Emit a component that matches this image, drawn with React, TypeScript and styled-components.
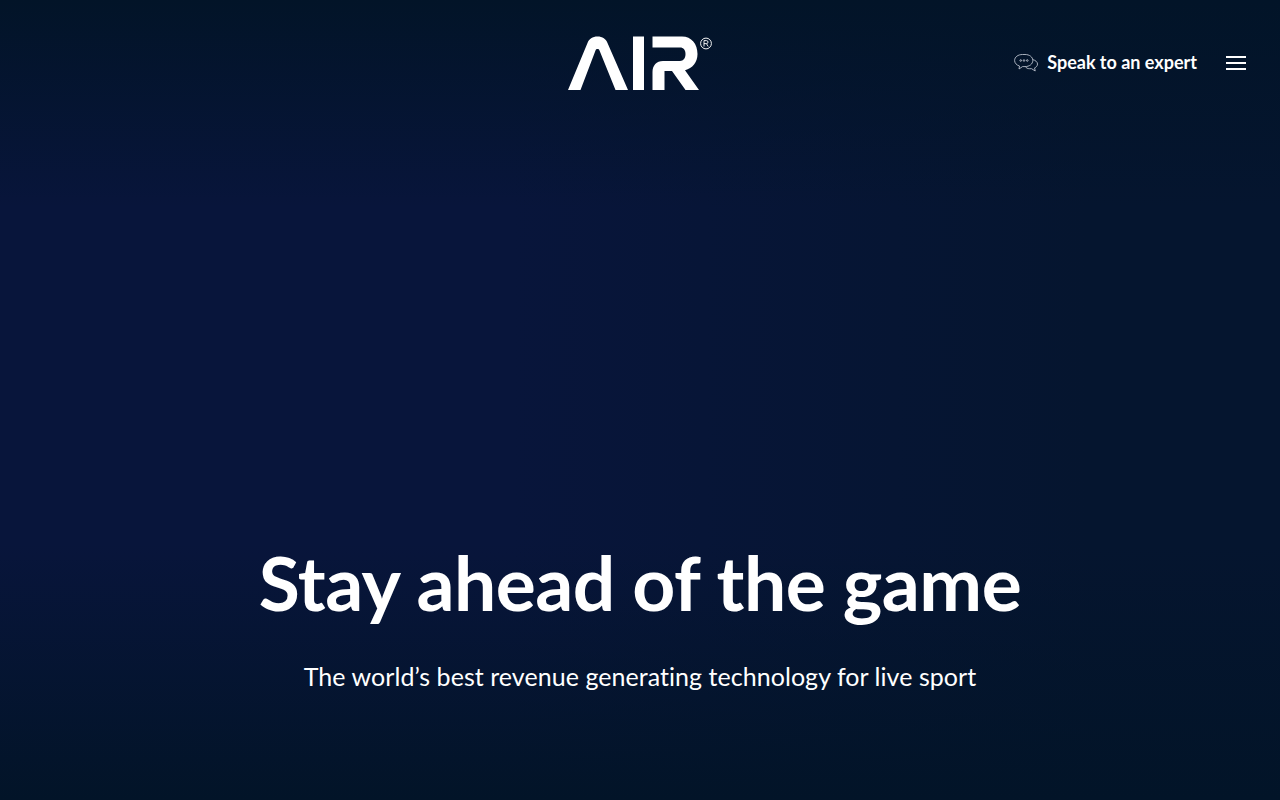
import React from "react";
import styled, { createGlobalStyle } from "styled-components";

const Global = createGlobalStyle`
  html, body { margin: 0; padding: 0; height: 100%; background: #03122b; }
  #root { height: 100%; }
`;

const Page = styled.main`
  width: 1280px;
  height: 800px;
  overflow: hidden;
  display: flex;
  flex-direction: column;
  color: #fff;
  font-family: Lato, "Liberation Sans", sans-serif;
  font-variant-ligatures: none;
  background:
    linear-gradient(180deg, #021428 0%, rgba(2, 20, 40, 0) 26%, rgba(2, 20, 40, 0) 68%, #021428 100%),
    linear-gradient(90deg, #08153b 0%, #08153b 40%, #05152f 85%, #05152f 100%);
`;

const Header = styled.header`
  display: grid;
  grid-template-columns: 1fr auto 1fr;
  align-items: center;
  height: 126px;
`;

const Logo = styled.svg`
  display: block;
  grid-column: 2;
  width: 144px;
  height: 56px;
`;

const Actions = styled.div`
  grid-column: 3;
  justify-self: end;
  display: flex;
  align-items: center;
  margin-right: 34px;
`;

const Expert = styled.a`
  display: flex;
  align-items: center;
  gap: 9px;
  color: #fff;
  font-size: 18px;
  font-weight: 700;
  line-height: 24px;
  text-decoration: none;
`;

const ExpertLabel = styled.span`
  position: relative;
  top: -1px;
`;

const ChatIcon = styled.svg`
  display: block;
  width: 24px;
  height: 22px;
`;

const Burger = styled.button`
  display: flex;
  flex-direction: column;
  justify-content: space-between;
  width: 20px;
  height: 14px;
  margin-left: 29px;
  padding: 0;
  border: 0;
  background: none;
`;

const BurgerBar = styled.span`
  display: block;
  height: 2px;
  background: #fff;
`;

const Hero = styled.section`
  flex: 1;
  display: flex;
  flex-direction: column;
  align-items: center;
  justify-content: flex-end;
  padding-bottom: 107px;
`;

const Title = styled.h1`
  margin: 0 0 33px;
  font-size: 75px;
  line-height: 92px;
  font-weight: 700;
  letter-spacing: -0.55px;
`;

const Sub = styled.p`
  margin: 0;
  font-size: 25px;
  line-height: 32px;
  font-weight: 400;
  letter-spacing: 0.05px;
  position: relative;
  top: -1px;
`;

export default function App() {
  return (
    <Page>
      <Global />
      <Header>
        <Logo viewBox="0 0 144 56" aria-label="AIR">
          <path
            fill="#fff"
            d="M0 55 L19.5 8 C21 4 24.5 1.5 29.5 1.5 C34.5 1.5 38 4 39.5 8 L60 55 H47.5 L31.5 15.5 C30.8 13.6 28.2 13.6 27.5 15.5 L12.5 55 Z"
          />
          <rect x="65" y="1.5" width="11" height="53.5" fill="#fff" />
          <path
            fill="#fff"
            d="M84.5 1.5 H114 C123.5 1.5 129.5 9 129.5 19 C129.5 27 124.5 33.5 117 35.2 L131 55 H117.5 L104 36 H96.5 V55 H84.5 V37 C84.5 30.5 88.5 26 95 26 H112 C115.5 26 117.5 23 117.5 19 C117.5 15 115.5 12.5 112 12.5 H84.5 Z"
          />
          <circle cx="138" cy="8.5" r="5.4" fill="none" stroke="#fff" strokeWidth="0.95" />
          <path
            d="M136 11.5 V5.6 H138.4 Q140 5.6 140 7.1 Q140 8.6 138.4 8.6 H136 M138.4 8.6 L140.2 11.5"
            fill="none"
            stroke="#fff"
            strokeWidth="0.9"
          />
        </Logo>
        <Actions>
          <Expert href="#">
            <ChatIcon viewBox="0 0 24 22" fill="none" stroke="#c5cbd6" strokeWidth="0.85">
              <path d="M8.5 2.5 H11 C15.5 2.5 18.8 5 18.8 8.5 C18.8 12 15.5 14.6 11 14.6 H8.5 L5 17 L5.5 14 C2.6 13.2 0.6 11 0.6 8.5 C0.6 5 4 2.5 8.5 2.5 Z" />
              <path d="M18.6 7.6 C21.5 8.2 23.5 10 23.5 12 C23.5 13.8 22.3 15.2 20.6 15.9 L21.2 19 L17.6 16.7 H15.5 C13.7 16.7 12.2 16 11.4 14.7" />
              <circle cx="6.7" cy="8.5" r="0.8" />
              <circle cx="10" cy="8.5" r="0.8" />
              <circle cx="13.3" cy="8.5" r="0.8" />
            </ChatIcon>
            <ExpertLabel>Speak to an expert</ExpertLabel>
          </Expert>
          <Burger aria-label="Menu">
            <BurgerBar />
            <BurgerBar />
            <BurgerBar />
          </Burger>
        </Actions>
      </Header>
      <Hero>
        <Title>Stay ahead of the game</Title>
        <Sub>The world’s best revenue generating technology for live sport</Sub>
      </Hero>
    </Page>
  );
}
